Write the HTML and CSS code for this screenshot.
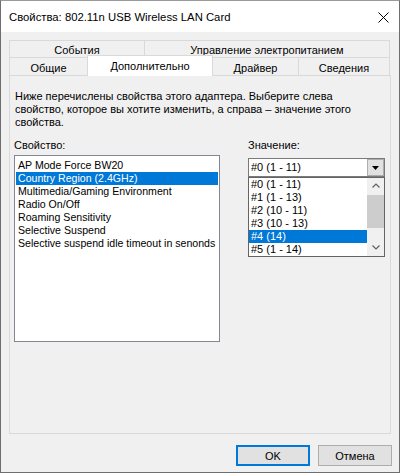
FILE: index.html
```html
<!DOCTYPE html>
<html lang="ru">
<head>
<meta charset="utf-8">
<title>Свойства</title>
<link rel="stylesheet" href="styles.css">
</head>
<body>
<div class="window">
  <div class="titlebar">
    <span class="title">Свойства: 802.11n USB Wireless LAN Card</span>
    <svg class="close" width="11" height="11" viewBox="0 0 11 11"><path d="M0.5 0.5L10.5 10.5M10.5 0.5L0.5 10.5" stroke="#000" stroke-width="1" fill="none"/></svg>
  </div>
  <div class="body">
    <div class="tabs">
      <div class="tabrow back">
        <div class="tab tb1">События</div>
        <div class="tab tb2">Управление электропитанием</div>
      </div>
      <div class="tabrow front">
        <div class="tab tf1">Общие</div>
        <div class="tab tf2 active">Дополнительно</div>
        <div class="tab tf3">Драйвер</div>
        <div class="tab tf4">Сведения</div>
      </div>
    </div>
    <div class="panel">
      <p class="desc">Ниже перечислены свойства этого адаптера. Выберите слева<br>свойство, которое вы хотите изменить, а справа – значение этого<br>свойства.</p>
      <div class="cols">
        <div class="col col-left">
          <div class="label">Свойство:</div>
          <ul class="listbox">
            <li>AP Mode Force BW20</li>
            <li class="sel">Country Region (2.4GHz)</li>
            <li>Multimedia/Gaming Environment</li>
            <li>Radio On/Off</li>
            <li>Roaming Sensitivity</li>
            <li>Selective Suspend</li>
            <li>Selective suspend idle timeout in senonds</li>
          </ul>
        </div>
        <div class="col col-right">
          <div class="label">Значение:</div>
          <div class="combo">
            <span class="combo-text">#0 (1 - 11)</span>
            <span class="combo-btn"><svg width="7" height="4" viewBox="0 0 7 4"><path d="M0 0H7L3.5 4Z" fill="#000"/></svg></span>
            <div class="dropdown">
              <ul class="ditems">
                <li>#0 (1 - 11)</li>
                <li>#1 (1 - 13)</li>
                <li>#2 (10 - 11)</li>
                <li>#3 (10 - 13)</li>
                <li class="sel">#4 (14)</li>
                <li>#5 (1 - 14)</li>
              </ul>
              <div class="scrollbar">
                <svg class="arr" width="8" height="5" viewBox="0 0 8 5"><path d="M0.5 4.5L4 1L7.5 4.5" stroke="#606060" stroke-width="1.2" fill="none"/></svg>
                <div class="track"><div class="thumb"></div></div>
                <svg class="arr" width="8" height="5" viewBox="0 0 8 5"><path d="M0.5 0.5L4 4L7.5 0.5" stroke="#606060" stroke-width="1.2" fill="none"/></svg>
              </div>
            </div>
          </div>
        </div>
      </div>
    </div>
    <div class="buttons">
      <button class="btn default">OK</button>
      <button class="btn">Отмена</button>
    </div>
  </div>
</div>
</body>
</html>
```
FILE: styles.css
```css
* { box-sizing: border-box; }
html, body { margin: 0; padding: 0; }
body {
  width: 400px;
  height: 473px;
  font-family: "Liberation Sans", Arial, sans-serif;
  font-size: 11px;
  color: #000;
  background: #f0f0f0;
  overflow: hidden;
}
.window {
  width: 400px;
  height: 473px;
  border: 1px solid #6e6e6e;
  border-top-color: #9a9a9a;
  display: flex;
  flex-direction: column;
  background: #f0f0f0;
}
.titlebar {
  height: 31px;
  background: #fff;
  display: flex;
  align-items: center;
  justify-content: space-between;
  padding: 0 10px 0 8px;
  flex: none;
}
.title { font-size: 11.3px; line-height: 15px; margin-top: 1px; }
.close { margin-top: 2px; }
.body {
  flex: 1;
  padding: 8px 8px 0 8px;
  display: flex;
  flex-direction: column;
}
.tabs { display: flex; flex-direction: column; flex: none; }
.tabrow { display: flex; }
.tab {
  border: 1px solid #d9d9d9;
  border-bottom: none;
  background: #f0f0f0;
  text-align: center;
  margin-left: -1px;
  line-height: 14px;
}
.tab:first-child { margin-left: 0; }
.tabrow.back { height: 17px; }
.tabrow.back .tab { height: 17px; padding-top: 2px; }
.tabrow.front { height: 18px; align-items: flex-end; }
.tabrow.front .tab { height: 18px; padding-top: 3px; }
.tb1 { width: 136px; }
.tb2 { width: 246px; }
.tf1 { width: 79px; }
.tf2 { width: 126px; }
.tf3 { width: 87px; }
.tf4 { width: 92px; }
.tabrow.front .tab.active {
  height: 21px;
  margin-bottom: -1px;
  background: #fff;
  position: relative;
  z-index: 2;
  padding-top: 3px;
}
.panel {
  flex: none;
  width: 382px;
  height: 359px;
  border: 1px solid #d9d9d9;
  background: #f0f0f0;
  padding: 14px 5px 0 5px;
  position: relative;
  z-index: 1;
}
.desc { margin: 0; line-height: 13px; }
.cols { display: flex; margin-top: 10px; }
.col { display: flex; flex-direction: column; }
.col-left { width: 207px; margin-left: -1px; }
.col-right { width: 137px; margin-left: 27px; }
.label { line-height: 13px; height: 16px; }
.listbox {
  list-style: none;
  margin: 0;
  padding: 3px 1px 0 1px;
  height: 187px;
  width: 206px;
  background: #fff;
  border: 1px solid #828790;
  font-size: 10.6px;
}
.listbox li { line-height: 13px; height: 13px; padding-left: 2px; white-space: nowrap; }
.sel { background: #0078d7; color: #fff; }
.combo {
  position: relative;
  height: 19px;
  width: 137px;
  margin-top: 3px;
  border: 1px solid #7a7a7a;
  background: #fff;
  display: flex;
  align-items: center;
  justify-content: space-between;
  padding-left: 2px;
}
.combo-text { line-height: 13px; }
.combo-btn {
  width: 17px;
  height: 17px;
  border: 1px solid #adadad;
  background: #e1e1e1;
  display: flex;
  align-items: center;
  justify-content: center;
}
.dropdown {
  position: absolute;
  left: -1px;
  top: 18px;
  width: 137px;
  height: 80px;
  border: 1px solid #646464;
  background: #fff;
  display: flex;
}
.ditems {
  list-style: none;
  margin: 0;
  padding: 0;
  width: 118px;
}
.ditems li { line-height: 13px; height: 13px; padding-left: 2px; white-space: nowrap; }
.scrollbar {
  width: 17px;
  background: #f0f0f0;
  display: flex;
  flex-direction: column;
  align-items: center;
}
.arr { margin: 5px 0 6px; flex: none; }
.track { flex: 1; width: 100%; }
.thumb { height: 33px; margin-top: 1px; background: #cdcdcd; }
.buttons {
  display: flex;
  justify-content: flex-end;
  gap: 8px;
  margin-top: 11px;
  margin-right: -1px;
}
.btn {
  width: 74px;
  height: 21px;
  font-family: "Liberation Sans", Arial, sans-serif;
  font-size: 11px;
  background: #e1e1e1;
  border: 1px solid #adadad;
  padding: 0;
  color: #000;
}
.btn.default { border: 2px solid #0078d7; }
```
